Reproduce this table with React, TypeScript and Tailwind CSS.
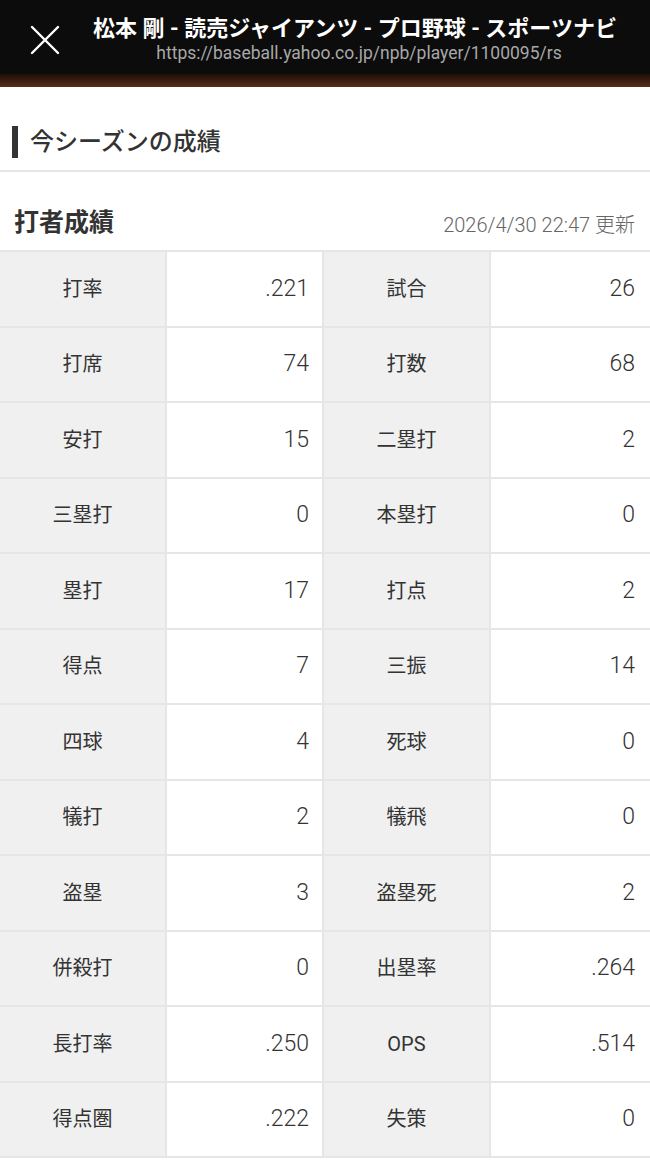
import React from "react";

const rows: [string, string, string, string][] = [
  ["打率", ".221", "試合", "26"],
  ["打席", "74", "打数", "68"],
  ["安打", "15", "二塁打", "2"],
  ["三塁打", "0", "本塁打", "0"],
  ["塁打", "17", "打点", "2"],
  ["得点", "7", "三振", "14"],
  ["四球", "4", "死球", "0"],
  ["犠打", "2", "犠飛", "0"],
  ["盗塁", "3", "盗塁死", "2"],
  ["併殺打", "0", "出塁率", ".264"],
  ["長打率", ".250", "OPS", ".514"],
  ["得点圏", ".222", "失策", "0"],
];

const font = { fontFamily: '"Roboto", "Noto Sans CJK JP", sans-serif' };

export default function App() {
  return (
    <div className="w-[650px] h-[1174px] bg-white overflow-hidden" style={font}>
      <div className="bg-[#0c0c0c] h-[74px] flex items-center relative">
        <svg className="absolute left-[30px] top-[25px]" width="30" height="30" viewBox="0 0 30 30">
          <path d="M2 2 L28 28 M28 2 L2 28" stroke="#fff" strokeWidth="2.4" strokeLinecap="round" />
        </svg>
        <div className="w-full flex flex-col items-center pl-[60px] pt-[6px]">
          <div className="text-white font-bold text-[22px] leading-[26px]">
            松本 剛 - 読売ジャイアンツ - プロ野球 - スポーツナビ
          </div>
          <div className="text-[#a8a8a8] text-[17.5px] leading-[22px] mt-[0px] ml-[8px]">
            https://baseball.yahoo.co.jp/npb/player/1100095/rs
          </div>
        </div>
      </div>
      <div className="h-[13px] bg-gradient-to-b from-[#1e0f08] to-[#5a2e1a]" />
      <div className="h-[38px]" />
      <div className="flex items-center h-[34px] pl-[12px]">
        <div className="w-[6px] h-[32px] bg-[#333]" />
        <div className="ml-[12px] text-[24px] text-[#333] font-medium leading-[32px]">今シーズンの成績</div>
      </div>
      <div className="h-[11px]" />
      <div className="h-[2px] bg-[#e6e6e6]" />
      <div className="flex items-end justify-between px-[14px] pt-[34px] pb-[10px]">
        <div className="text-[25px] font-bold text-[#333] leading-[34px]">打者成績</div>
        <div className="text-[20px] font-light text-[#666] leading-[30px] pr-[1px]">2026/4/30 22:47 更新</div>
      </div>
      <div className="grid grid-cols-[165px_155px_165px_159px] gap-[2px] bg-[#e6e6e6] py-[2px]">
        {rows.map((r, i) => (
          <React.Fragment key={i}>
            <div className="bg-[#f0f0f0] h-[73.5px] flex items-center justify-center text-[20px] text-[#333]">{r[0]}</div>
            <div className="bg-white h-[73.5px] flex items-center justify-end pr-[13px] text-[23px] font-light text-[#333]">{r[1]}</div>
            <div className="bg-[#f0f0f0] h-[73.5px] flex items-center justify-center text-[20px] text-[#333]">{r[2]}</div>
            <div className="bg-white h-[73.5px] flex items-center justify-end pr-[15px] text-[23px] font-light text-[#333]">{r[3]}</div>
          </React.Fragment>
        ))}
      </div>
    </div>
  );
}
